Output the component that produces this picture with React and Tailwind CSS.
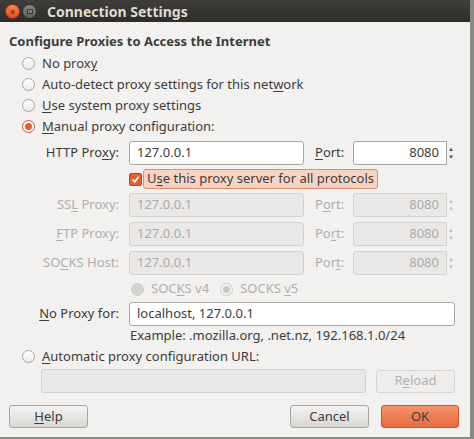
import React from 'react';

const font = { fontFamily: '"Noto Sans", "DejaVu Sans", sans-serif' };

function U({ children }) {
  return <span className="underline underline-offset-2 decoration-1">{children}</span>;
}

function Radio({ checked, disabled, filled }) {
  if (filled) {
    return <span className="w-[13px] h-[13px] rounded-full bg-[#d6d4d2] border border-[#cfcdcb] shrink-0" />;
  }
  return (
    <span
      className={`w-[13px] h-[13px] rounded-full border flex items-center justify-center shrink-0 ${
        disabled ? 'border-[#cfcdcb] bg-[#f2f1f0]' : checked ? 'border-[#c5552b] bg-white' : 'border-[#a9a6a2] bg-gradient-to-b from-white to-[#ebe9e7]'
      }`}
    >
      {checked && <span className={`w-[7px] h-[7px] rounded-full ${disabled ? 'bg-[#c9c7c5]' : 'bg-[#e2602f]'}`} />}
    </span>
  );
}

function RadioRow({ checked, children, className = '' }) {
  return (
    <div className={`flex items-center gap-[7px] pl-[22px] h-[21px] ${className}`}>
      <Radio checked={checked} />
      <span>{children}</span>
    </div>
  );
}

function Field({ value, disabled, className = '', right }) {
  return (
    <div
      className={`h-[24px] rounded-[3px] border flex items-center px-[7px] ${
        disabled ? 'bg-[#e9e8e6] border-[#d3d1cf] text-[#acaaa8]' : 'bg-white border-[#a9a6a2] text-[#3c3c3c]'
      } ${right ? 'justify-end' : ''} ${className}`}
    >
      {value}
    </div>
  );
}

function Spin({ value, disabled }) {
  return (
    <div className="flex items-center">
      <Field value={value} disabled={disabled} right className="w-[94px] rounded-r-none" />
      <div className={`w-[8px] h-[24px] flex flex-col items-center justify-center text-[7px] leading-[8px] ${disabled ? 'text-[#c4c2c0]' : 'text-[#555]'}`}>
        <span>▴</span>
        <span>▾</span>
      </div>
    </div>
  );
}

function ProxyRow({ label, value, port, disabled, portLabel }) {
  return (
    <div className="flex items-center h-[24px]">
      <span className={`w-[120px] text-right pr-[1px] ${disabled ? 'text-[#b0aeac]' : ''}`}>{label}</span>
      <Field value={value} disabled={disabled} className="ml-[9px] w-[175px]" />
      <span className={`ml-[11px] w-[38px] ${disabled ? 'text-[#b0aeac]' : ''}`}>{portLabel}</span>
      <Spin value={port} disabled={disabled} />
    </div>
  );
}

function Button({ children, className = '', primary, disabled }) {
  return (
    <div
      className={`h-[23px] rounded-[3px] border flex items-center justify-center ${
        primary
          ? 'bg-gradient-to-b from-[#f4926c] to-[#e76a3d] border-[#c8572e] text-[#3c3c3c]'
          : disabled
          ? 'bg-[#eeedec] border-[#d6d4d2] text-[#b3b1af]'
          : 'bg-gradient-to-b from-[#f4f3f2] to-[#d9d7d4] border-[#a9a6a2] text-[#3c3c3c]'
      } ${className}`}
    >
      {children}
    </div>
  );
}

export default function App() {
  return (
    <div className="w-[474px] h-[439px] bg-[#8a8884] overflow-hidden text-[13px] text-[#3c3c3c]" style={font}>
      <div className="w-[470px] h-[437px] bg-[#f2f1f0] flex flex-col">
        <div className="h-[22px] bg-gradient-to-b from-[#3f3e3a] to-[#2e2d29] flex items-center pl-[5px] shrink-0">
          <span className="w-[15px] h-[15px] rounded-full bg-gradient-to-b from-[#f78552] to-[#df4a1c] border border-[#9c3a17] flex items-center justify-center text-[#6a2a10] text-[9px] leading-none font-bold">×</span>
          <span className="ml-[2px] w-[15px] h-[15px] rounded-full bg-gradient-to-b from-[#8a8882] to-[#5f5d58] border border-[#2b2a27] flex items-center justify-center">
            <span className="w-[6px] h-[5px] border border-[#3a3935] bg-[#7c7a75]" />
          </span>
          <span className="ml-[10px] text-[#dfdbd2] font-bold text-[14px]">Connection Settings</span>
        </div>

        <div className="flex flex-col pt-[10px]">
          <div className="pl-[9px] font-bold h-[20px] flex items-center">Configure Proxies to Access the Internet</div>
          <RadioRow className="mt-[1px]">No prox<U>y</U></RadioRow>
          <RadioRow>Auto-detect proxy settings for this net<U>w</U>ork</RadioRow>
          <RadioRow><U>U</U>se system proxy settings</RadioRow>
          <RadioRow checked><U>M</U>anual proxy configuration:</RadioRow>

          <div className="flex flex-col mt-[4px]">
            <ProxyRow label={<>HTTP Pro<U>x</U>y:</>} value="127.0.0.1" port="8080" portLabel={<><U>P</U>ort:</>} />
            <div className="flex items-center h-[22px] mt-[3px] pl-[129px]">
              <span className="w-[13px] h-[13px] rounded-[2px] bg-[#e2602f] border border-[#b44a22] flex items-center justify-center shrink-0">
                <svg width="9" height="9" viewBox="0 0 9 9"><path d="M1.5 4.5 L3.7 7 L7.8 1.5" stroke="#fff" strokeWidth="1.6" fill="none" /></svg>
              </span>
              <span className="ml-[1px] h-[20px] px-[3px] rounded-[3px] bg-[#f9d3c2] border border-[#e58c68] flex items-center">
                U<U>s</U>e this proxy server for all protocols
              </span>
            </div>
            <div className="flex flex-col gap-[5px] mt-[3px]">
              <ProxyRow disabled label={<>SS<U>L</U> Proxy:</>} value="127.0.0.1" port="8080" portLabel={<>P<U>o</U>rt:</>} />
              <ProxyRow disabled label={<><U>F</U>TP Proxy:</>} value="127.0.0.1" port="8080" portLabel={<>Po<U>r</U>t:</>} />
              <ProxyRow disabled label={<>SO<U>C</U>KS Host:</>} value="127.0.0.1" port="8080" portLabel={<>Por<U>t</U>:</>} />
            </div>
            <div className="flex items-center h-[24px] mt-[2px] pl-[131px] text-[#b0aeac]">
              <Radio filled />
              <span className="ml-[7px]">SOC<U>K</U>S v4</span>
              <span className="ml-[11px]"><Radio checked disabled /></span>
              <span className="ml-[7px]">SOCKS <U>v</U>5</span>
            </div>
            <div className="flex items-center h-[24px] mt-[1px]">
              <span className="w-[120px] text-right pr-[1px]"><U>N</U>o Proxy for:</span>
              <Field value="localhost, 127.0.0.1" className="ml-[9px] w-[326px]" />
            </div>
            <div className="pl-[130px] h-[20px] flex items-center">Example: .mozilla.org, .net.nz, 192.168.1.0/24</div>
          </div>

          <RadioRow>
            <U>A</U>utomatic proxy configuration URL:
          </RadioRow>
          <div className="flex items-center mt-[2px] pl-[41px]">
            <Field disabled value="" className="w-[325px] h-[22px]" />
            <Button disabled className="ml-[10px] w-[79px] h-[23px]">R<U>e</U>load</Button>
          </div>

          <div className="flex items-center mt-[12px] px-[9px]">
            <Button className="w-[79px]"><U>H</U>elp</Button>
            <div className="flex-1" />
            <Button className="w-[79px]">Cancel</Button>
            <Button primary className="ml-[12px] w-[78px]">OK</Button>
            <div className="w-[2px]" />
          </div>
        </div>
      </div>
    </div>
  );
}
